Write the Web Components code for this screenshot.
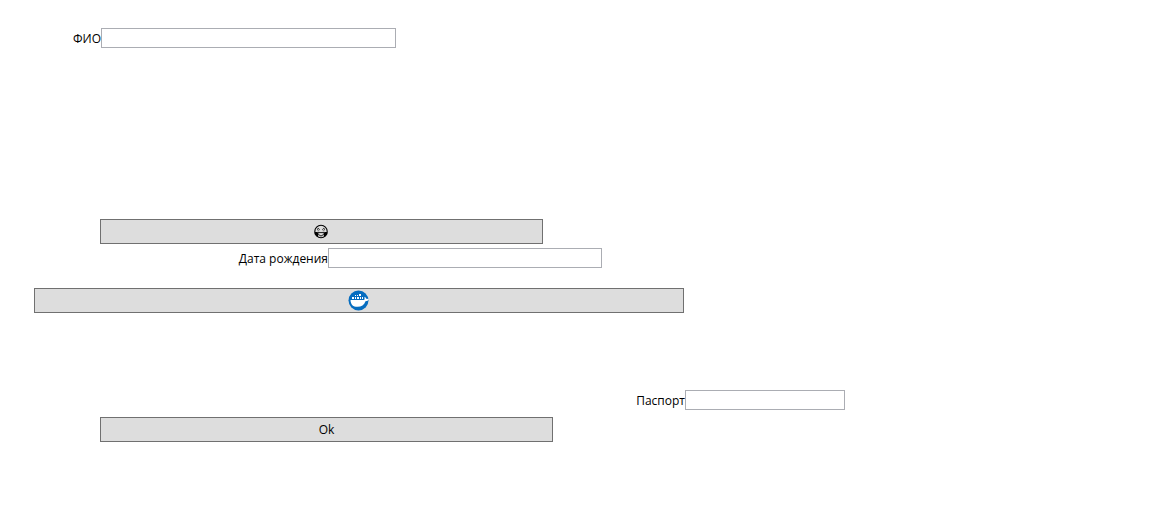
<!DOCTYPE html>
<html lang="ru">
<head>
<meta charset="utf-8">
<title>Анкета</title>
<style>
body { margin: 0; background: #fff; color: #000; font: 12px/16px "Open Sans", "Noto Sans", sans-serif; }
</style>
</head>
<body>
<person-form></person-form>
<script>
class FormField extends HTMLElement {
  constructor() {
    super();
    this.attachShadow({ mode: "open" }).innerHTML = `
      <style>
        :host { display: grid; grid-template-columns: var(--start) minmax(0, var(--size)); align-items: center; }
        label { justify-self: end; white-space: nowrap; padding-top: 2px; }
        input { box-sizing: border-box; width: 100%; height: 20px; margin: 0; padding: 0 4px; border: 1px solid #abadb3; border-radius: 0; background: #fff; color: inherit; font: inherit; }
      </style>
      <label for="value"><slot></slot></label>
      <input id="value" type="text">`;
  }
}
customElements.define("form-field", FormField);

class FormButton extends HTMLElement {
  constructor() {
    super();
    this.attachShadow({ mode: "open" }).innerHTML = `
      <style>
        :host { display: grid; grid-template-columns: minmax(0, var(--size)); padding-left: var(--start); }
        button { display: flex; align-items: center; justify-content: center; box-sizing: border-box; height: 25px; margin: 0; padding: 0; border: 1px solid #707070; border-radius: 0; background: #ddd; color: inherit; font: inherit; }
        ::slotted(svg) { display: block; }
      </style>
      <button type="button"><slot></slot></button>`;
  }
  connectedCallback() {
    const name = this.getAttribute("label");
    if (name) this.shadowRoot.querySelector("button").setAttribute("aria-label", name);
  }
}
customElements.define("form-button", FormButton);

class PersonForm extends HTMLElement {
  constructor() {
    super();
    this.attachShadow({ mode: "open" }).innerHTML = `
      <style>
        :host { display: block; padding: 28px 0; }
        .group { display: flex; flex-direction: column; }
        .group + .group { margin-top: 20px; }
        .name { --start: 101px; --size: 295px; margin-bottom: 171px; }
        .face { --start: 100px; --size: 443px; margin-bottom: 4px; }
        .birth { --start: 328px; --size: 274px; }
        .whale { --start: 34px; --size: 650px; margin-bottom: 77px; }
        .passport { --start: 685px; --size: 160px; margin-bottom: 7px; }
        .ok { --start: 100px; --size: 453px; }
      </style>
      <div class="group">
        <form-field class="name">ФИО</form-field>
        <form-button class="face" label="Смайлик">
          <svg width="15" height="15" viewBox="0 0 15 15" fill="none" stroke="#000" aria-hidden="true">
            <circle cx="7" cy="7.500" r="6.200" stroke-width="1.100"/>
            <path d="M3 5.500q1.300-2 2.600 0M8.400 5.500q1.300-2 2.600 0" stroke-width="1"/>
            <path d="M3.500 6.800h1.800M8.700 6.800h1.800" stroke-width=".5"/>
            <path d="M.6 8h2.600l1 1v3l-1 .8L.8 10.500zM13.400 8h-2.600l-1 1v3l1 .8 2.400-2.300z" fill="#000" stroke="none"/>
            <path d="M3.500 8.600h7M4 9.500q3 5 6 0" stroke-width=".9"/>
          </svg>
        </form-button>
        <form-field class="birth">Дата рождения</form-field>
      </div>
      <div class="group">
        <form-button class="whale" label="Docker">
          <svg width="22" height="21" viewBox="0 0 22 21" aria-hidden="true">
            <circle cx="10.500" cy="10.500" r="10" fill="#066dc0"/>
            <path d="M2.500 10h13.400c.8-.3.900-1.200.4-2.300l.7-1 1.300 2 2.500.4c-.4 1.500-1.700 2.200-3.300 2.200-1.300 3.800-4 5.500-8 5.500-4.500 0-6.700-2-7-6.800z" fill="#fff"/>
            <path d="M4 7h2v2H4zM7 7h1v2H7zM9 7h2v2H9zM12 7h1v2h-1zM14 7h1v2h-1zM7 5h1v1H7zM9 5h1v1H9zM11 4h2v2h-2z" fill="#fff"/>
          </svg>
        </form-button>
        <form-field class="passport">Паспорт</form-field>
        <form-button class="ok">Ok</form-button>
      </div>`;
  }
}
customElements.define("person-form", PersonForm);
</script>
</body>
</html>
